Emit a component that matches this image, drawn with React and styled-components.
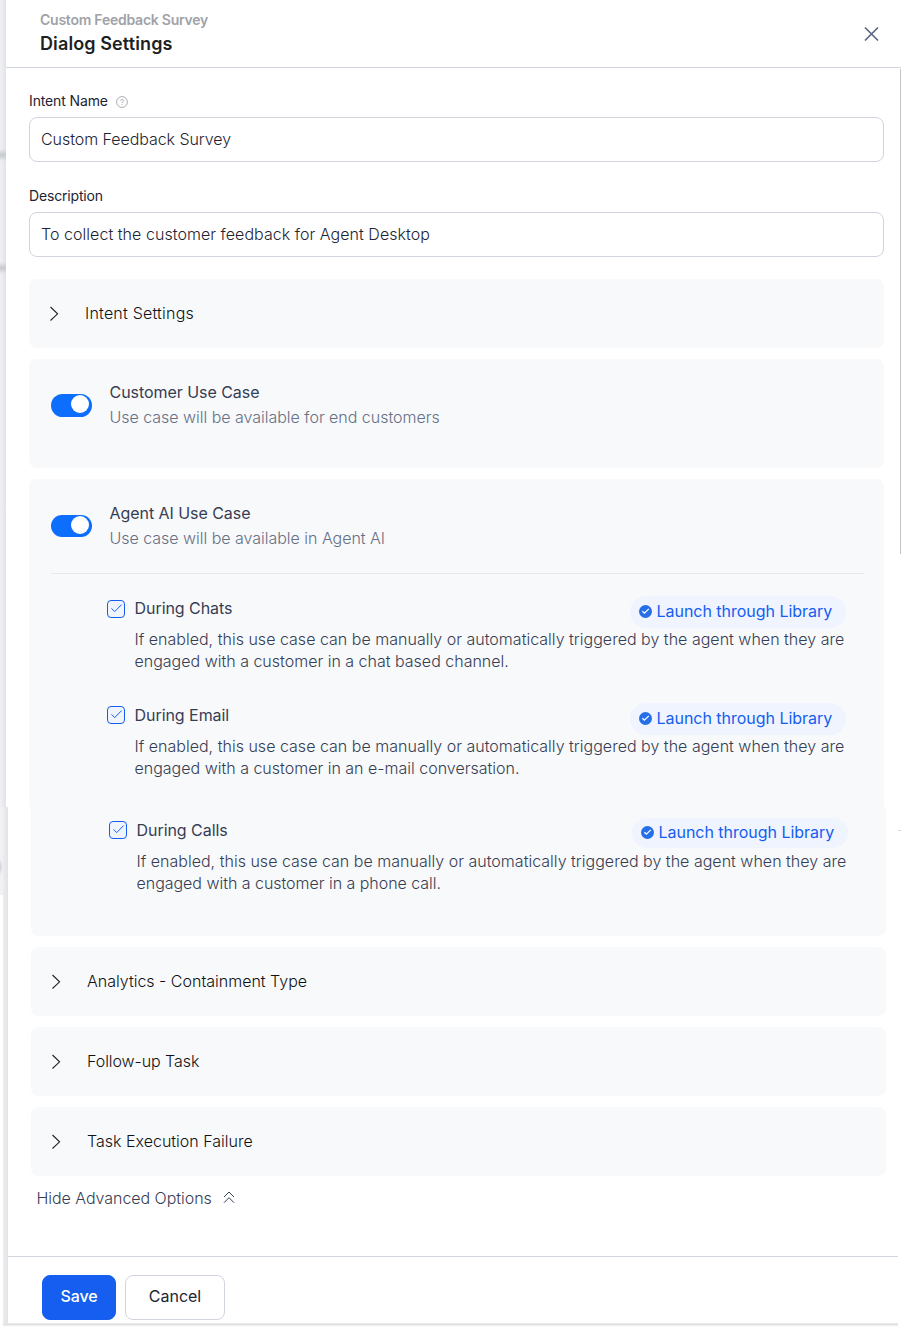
import React from "react";
import styled, { createGlobalStyle } from "styled-components";

const GlobalStyle = createGlobalStyle`
  *, *::before, *::after { box-sizing: border-box; }
  body { margin: 0; background: #fff; font-family: Inter, "Liberation Sans", sans-serif; }
  button { font-family: inherit; }
`;

const Page = styled.div`
  width: 901px;
  height: 1327px;
  overflow: hidden;
  background: #fff;
`;

const Segment = styled.section`
  display: flex;
  height: ${(p) => p.$height}px;
`;

const UpperEdge = styled.div`
  width: 6px;
  flex: none;
  background:
    linear-gradient(transparent, #c6c9cd 50%, transparent) 0 149px / 6px 12px no-repeat,
    linear-gradient(transparent, #c8cacd 50%, transparent) 0 262px / 6px 12px no-repeat,
    linear-gradient(90deg, #f0f1f3, #e2e3e6);
`;

const LowerEdge = styled.div`
  width: 8px;
  flex: none;
  background:
    radial-gradient(ellipse 3px 8px at 0 60px, #cfd1d4, transparent) 0 0 / 3px 88px no-repeat,
    linear-gradient(#f0f1f3, #f0f1f3) 0 0 / 3px 88px no-repeat,
    linear-gradient(90deg, #ededef, #e2e3e6) 3px 0 / 5px 100% no-repeat;
`;

const Panel = styled.div`
  flex: 1;
  min-width: 0;
  display: flex;
  flex-direction: column;
  background: #fff;
`;

const Header = styled.header`
  display: flex;
  justify-content: space-between;
  height: 68px;
  flex: none;
  padding: 11px 22px 0 34px;
  border-bottom: 1px solid #d0d5dd;
`;

const Text = styled.div`
  font-size: ${(p) => p.$size || 16}px;
  font-weight: ${(p) => p.$weight || 355}; 
  line-height: ${(p) => p.$line || 22}px;
  letter-spacing: ${(p) => p.$track || 0}px;
  color: ${(p) => p.$color || "#363d53"};
  white-space: nowrap;
`;

const CloseButton = styled.button`
  width: 16px;
  height: 16px;
  margin-top: 15px;
  padding: 0;
  border: 0;
  background: none;
  svg { display: block; }
`;

const Scroller = styled.div`
  display: flex;
  flex: 1;
  justify-content: space-between;
`;

const ScrollThumb = styled.div`
  width: 1px;
  height: 485px;
  margin-top: 1px;
  background: #c4c4c6;
`;

const Body = styled.main`
  display: flex;
  flex-direction: column;
  width: 878px;
  padding-left: 23px;
`;

const Label = styled.label`
  display: flex;
  align-items: center;
  gap: 8px;
  height: 20px;
  margin: ${(p) => p.$top}px 0 6px;
`;

const Input = styled.div`
  display: flex;
  align-items: center;
  height: 45px;
  padding: 0 11px 2px;
  border: 1px solid #d0d5dd;
  border-radius: 8px;
`;

const Card = styled.div`
  height: ${(p) => p.$height}px;
  margin-top: ${(p) => p.$top ?? 11}px;
  border-radius: ${(p) => p.$radius || "8px"};
  background: #f8f9fb;
`;

const CollapsedCard = styled(Card)`
  display: flex;
  align-items: center;
  gap: 25px;
  padding: 0 0 1px 20px;
`;

const ToggleRow = styled.div`
  display: flex;
  gap: 17.5px;
  padding: ${(p) => p.$top}px 0 0 22px;
`;

const Toggle = styled.div`
  display: flex;
  justify-content: flex-end;
  width: 41px;
  height: ${(p) => p.$height}px;
  margin-top: 14px;
  padding: 1px 3px;
  border-radius: 12px;
  background: #0d6efd;
`;

const Knob = styled.div`
  width: 18px;
  height: 18px;
  border-radius: 50%;
  background: #fff;
`;

const Divider = styled.div`
  height: 1px;
  margin: ${(p) => p.$top}px 20px 0 22px;
  background: #e6e8ec;
`;

const Option = styled.div`
  display: flex;
  gap: 9.5px;
  width: 739px;
  height: ${(p) => p.$height}px;
  margin: ${(p) => p.$top}px 0 0 78px;
`;

const Checkbox = styled.div`
  display: flex;
  width: 18px;
  height: 18px;
  margin-top: ${(p) => p.$top}px;
  flex: none;
  border: 1px solid #155eef;
  border-radius: 4px;
  background: #eff4ff;
`;

const OptionContent = styled.div`
  width: 711.5px;
`;

const OptionHead = styled.div`
  display: flex;
  align-items: flex-start;
  justify-content: space-between;
  width: 711px;
  height: 32px;
`;

const Badge = styled.div`
  display: flex;
  align-items: center;
  gap: 5px;
  width: 216px;
  height: ${(p) => p.$height || 32}px;
  padding: 0 0 2px 9px;
  border-radius: 16px;
  background: #eff4ff;
`;

const AdvancedLink = styled.div`
  display: flex;
  align-items: center;
  gap: 11.5px;
  margin: 11px 0 0 5.5px;
`;

const Footer = styled.footer`
  display: flex;
  gap: 9px;
  width: 890px;
  height: 67px;
  margin-top: auto;
  padding: 18px 0 0 34px;
  border-top: 1px solid #d0d5dd;
`;

const Button = styled.button`
  width: ${(p) => p.$width}px;
  height: 45px;
  padding: 0 0 3px;
  border: 1px solid ${(p) => (p.$primary ? "#155eef" : "#d0d5dd")};
  border-radius: 8px;
  background: ${(p) => (p.$primary ? "#155eef" : "#fff")};
  display: flex;
  align-items: center;
  justify-content: center;
`;

const BottomShadow = styled.div`
  height: 4px;
  margin-left: -5px;
  width: 895px;
  flex: none;
  background: linear-gradient(#e9e9ea 0 1px, #dedfe0 1px 2px, #f0f0f1 2px 3px, #fafafa 3px);
`;

const EdgeTick = styled.div`
  width: 3px;
  height: 1px;
  margin-top: 23px;
  background: #d0d5dd;
`;

const HelpIcon = styled.svg`
  margin-top: 2px;
`;

const Chevron = () => (
  <svg width="11" height="16" viewBox="0 0 11 16" fill="none" stroke="#1f1f1f" strokeWidth="1.05">
    <path d="M1.5 2 8.6 8.8 1.5 15.5" />
  </svg>
);

const Help = () => (
  <HelpIcon width="12" height="12" viewBox="0 0 12 12" fill="none" stroke="#96999f" strokeWidth="0.8">
    <circle cx="6" cy="6" r="5.4" />
    <path d="M4.5 4.8c0-2 3-2 3 0 0 1-1.5 1-1.5 2.2M6 8.1v.9" />
  </HelpIcon>
);

const Tick = () => (
  <svg width="16" height="16" viewBox="0 0 16 16" fill="none" stroke="#155eef" strokeWidth="1">
    <path d="M3.5 7.4 6.7 10.6 13.6 3.6" />
  </svg>
);

const Verified = () => (
  <svg width="13" height="14" viewBox="0 0 13 14">
    <circle cx="6.5" cy="7.5" r="6.5" fill="#266fe8" />
    <path d="M3.4 7.2 5.4 9.1 9.8 4.9" fill="none" stroke="#fff" strokeWidth="1.3" />
  </svg>
);

function Collapsed({ title, top, track }) {
  return (
    <CollapsedCard $height={69} $top={top}>
      <Chevron />
      <Text $color="#101114" $track={track}>{title}</Text>
    </CollapsedCard>
  );
}

function UseCase({ title, hint, top, toggleHeight }) {
  return (
    <ToggleRow $top={top}>
      <Toggle $height={toggleHeight}><Knob /></Toggle>
      <div>
        <Text $line={25} $weight={420} $track={-0.05}>{title}</Text>
        <Text $line={25} $color="#667085" $track={-0.02}>{hint}</Text>
      </div>
    </ToggleRow>
  );
}

function Channel({ title, lines, top, height, boxTop = 3, badgeHeight }) {
  return (
    <Option $top={top} $height={height}>
      <Checkbox $top={boxTop}><Tick /></Checkbox>
      <OptionContent>
        <OptionHead>
          <Text $line={24} $weight={420} $track={-0.05}>{title}</Text>
          <Badge $height={badgeHeight}>
            <Verified />
            <Text $color="#155eef" $weight={420} $track={-0.03}>Launch through Library</Text>
          </Badge>
        </OptionHead>
        {lines.map(([line, track]) => <Text key={line} $track={track}>{line}</Text>)}
      </OptionContent>
    </Option>
  );
}

const intro = [
  "If enabled, this use case can be manually or automatically triggered by the agent when they are",
  0.015,
];

export default function App() {
  return (
    <Page>
      <GlobalStyle />
      <Segment $height={807}>
        <UpperEdge />
        <Panel>
          <Header>
            <div>
              <Text $size={14} $weight={580} $line={18} $track={-0.24} $color="#a0a2a8">Custom Feedback Survey</Text>
              <Text $size={18} $weight={580} $line={30} $track={0.11} $color="#1d1f24">Dialog Settings</Text>
            </div>
            <CloseButton aria-label="Close">
              <svg width="16" height="16" viewBox="0 0 16 16" stroke="#5c6784" strokeWidth="1.7">
                <path d="M2 1.5 15 14.5M15 1.5 2 14.5" />
              </svg>
            </CloseButton>
          </Header>
          <Scroller>
            <Body>
              <Label $top={23}>
                <Text $size={14} $weight={400} $track={-0.13} $color="#1d2433">Intent Name</Text>
                <Help />
              </Label>
              <Input><Text $color="#1d2433" $track={-0.06}>Custom Feedback Survey</Text></Input>
              <Label $top={24}><Text $size={14} $weight={400} $track={-0.17} $color="#1d2433">Description</Text></Label>
              <Input><Text $color="#1d2433" $track={0.045}>To collect the customer feedback for Agent Desktop</Text></Input>
              <Collapsed title="Intent Settings" top={22} track={0.21} />
              <Card $height={109}>
                <UseCase top={21} toggleHeight={23} title="Customer Use Case" hint="Use case will be available for end customers" />
              </Card>
              <Card $height={328} $radius="8px 8px 0 0">
                <UseCase top={22} toggleHeight={22} title="Agent AI Use Case" hint="Use case will be available in Agent AI" />
                <Divider $top={22} />
                <Channel top={22} height={107} boxTop={4} title="During Chats" lines={[intro, ["engaged with a customer in a chat based channel.", 0]]} />
                <Channel top={0} height={90} title="During Email" lines={[intro, ["engaged with a customer in an e-mail conversation.", 0]]} />
              </Card>
            </Body>
            <ScrollThumb />
          </Scroller>
        </Panel>
      </Segment>
      <Segment $height={520}>
        <LowerEdge />
        <Panel>
          <Scroller>
            <Body>
              <Card $height={129} $top={0} $radius="0 0 8px 8px">
                <Option $top={0} $height={11} />
                <Channel top={0} height={90} badgeHeight={30} title="During Calls" lines={[intro, ["engaged with a customer in a phone call.", -0.03]]} />
              </Card>
              <Collapsed title="Analytics - Containment Type" />
              <Collapsed title="Follow-up Task" track={-0.07} />
              <Collapsed title="Task Execution Failure" />
              <AdvancedLink>
                <Text $track={-0.04}>Hide Advanced Options</Text>
                <svg width="12" height="14" viewBox="0 0 12 14" fill="none" stroke="#344054" strokeWidth="1">
                  <path d="M1 6 6 1 11 6M1 11.7 6 6.7 11 11.7" />
                </svg>
              </AdvancedLink>
            </Body>
            <EdgeTick />
          </Scroller>
          <Footer>
            <Button $width={74} $primary><Text $weight={550} $track={-0.15} $color="#fff">Save</Text></Button>
            <Button $width={100}><Text $weight={420} $color="#1d2433">Cancel</Text></Button>
          </Footer>
          <BottomShadow />
        </Panel>
      </Segment>
    </Page>
  );
}
